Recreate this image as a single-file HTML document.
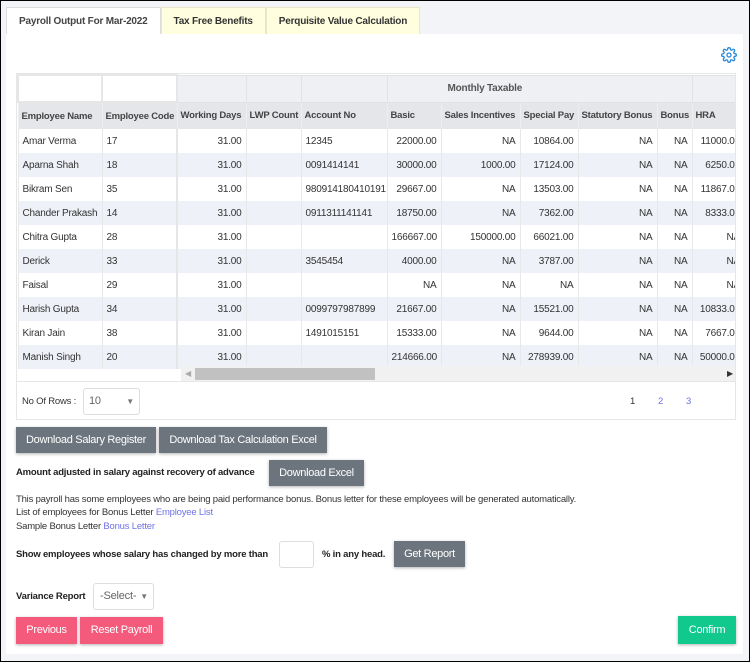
<!DOCTYPE html>
<html><head><meta charset="utf-8"><style>
*{box-sizing:border-box;margin:0;padding:0}
body{width:750px;height:662px;background:#f3f4f8;font-family:"Liberation Sans",Arial,sans-serif;font-size:10px;color:#333;position:relative;overflow:hidden;border:1px solid #000;letter-spacing:-0.2px}
.tabs{position:absolute;left:5px;top:6px;height:27px;display:flex}
.tab{height:27px;line-height:27px;padding:0 12px;font-size:10px;font-weight:bold;color:#333;background:#ffffe0;border:1px solid #e8e8c8;border-bottom:none}
.tab.a{background:#fff;border-color:#ddd;color:#444}
.panel{position:absolute;left:5px;top:33px;width:737px;height:620px;background:#fff}
.gear{position:absolute;left:720px;top:46px}
.wrap{position:absolute;left:15px;top:72px;width:720px;height:309px;overflow:hidden;border:1px solid #e6e6e6}
table{border-collapse:collapse;table-layout:fixed;position:absolute;left:0;top:0;width:726px}
td{height:24px;padding:0 4px;white-space:nowrap;overflow:hidden;border-left:1px solid #e8e8e8;font-size:10px;color:#333}
tr.h1 td{height:27px;background:#eef0f4;border:1px solid #e0e2e6;font-weight:bold;color:#555}
tr.h1 td.w{background:#fff;border:2px solid #e6e6e6}
tr.h2 td{height:27px;background:#e4e6ea;font-weight:bold;color:#444;border-left:1px solid #eee;font-size:9.5px;padding:0 3px}
tr.r:nth-child(even) td{background:#eef1f8}
td.n{text-align:right}
td.g{border-left:2px solid #e6e6e6}
.sb{position:absolute;left:164px;top:292px;width:556px;height:16px;background:#f1f1f1}
.sb .th{position:absolute;left:14px;top:2px;width:180px;height:12px;background:#c1c1c1}
.pg{position:absolute;left:15px;top:381px;width:720px;height:38px;border:1px solid #e6e6e6;border-top:none}
.sel{position:absolute;border:1px solid #ddd;border-radius:3px;background:#fff;color:#666;font-size:11px}
.btn{position:absolute;background:#6c757d;color:#fff;font-size:11px;letter-spacing:-0.3px;text-align:center;box-shadow:0 1px 3px rgba(0,0,0,.3);white-space:nowrap}
.lbl{position:absolute;font-weight:bold;font-size:9.5px;color:#222;white-space:nowrap}
.tx{position:absolute;font-size:9.5px;color:#333;white-space:nowrap}
a{color:#6f72e8;text-decoration:none}
.pink{background:#f45a7c}
</style></head><body>
<div class="tabs"><div class="tab a">Payroll Output For Mar-2022</div><div class="tab">Tax Free Benefits</div><div class="tab">Perquisite Value Calculation</div></div>
<div class="panel"></div>
<svg class="gear" width="16" height="16" viewBox="0 0 24 24" fill="none" stroke="#2b8ad8" stroke-width="2"><circle cx="12" cy="12" r="3"/><path d="M19.4 15a1.7 1.7 0 0 0 .3 1.8l.1.1a2 2 0 1 1-2.8 2.8l-.1-.1a1.7 1.7 0 0 0-1.8-.3 1.7 1.7 0 0 0-1 1.5V21a2 2 0 1 1-4 0v-.1a1.7 1.7 0 0 0-1.1-1.5 1.7 1.7 0 0 0-1.8.3l-.1.1a2 2 0 1 1-2.8-2.8l.1-.1a1.7 1.7 0 0 0 .3-1.8 1.7 1.7 0 0 0-1.5-1H3a2 2 0 1 1 0-4h.1a1.7 1.7 0 0 0 1.5-1.1 1.7 1.7 0 0 0-.3-1.8l-.1-.1a2 2 0 1 1 2.8-2.8l.1.1a1.7 1.7 0 0 0 1.8.3H9a1.7 1.7 0 0 0 1-1.5V3a2 2 0 1 1 4 0v.1a1.7 1.7 0 0 0 1 1.5 1.7 1.7 0 0 0 1.8-.3l.1-.1a2 2 0 1 1 2.8 2.8l-.1.1a1.7 1.7 0 0 0-.3 1.8V9a1.7 1.7 0 0 0 1.5 1H21a2 2 0 1 1 0 4h-.1a1.7 1.7 0 0 0-1.5 1z"/></svg>
<div class="wrap">
<table>
<colgroup><col style="width:84px"><col style="width:75px"><col style="width:69px"><col style="width:55px"><col style="width:86px"><col style="width:54px"><col style="width:79px"><col style="width:58px"><col style="width:79px"><col style="width:35px"><col style="width:52px"></colgroup>
<tr class="h1"><td class="w"></td><td class="w"></td><td></td><td></td><td></td><td colspan="5" style="padding-left:60px">Monthly Taxable</td><td></td></tr>
<tr class="h2"><td>Employee Name</td><td>Employee Code</td><td class="g">Working Days</td><td>LWP Count</td><td>Account No</td><td>Basic</td><td>Sales Incentives</td><td>Special Pay</td><td>Statutory Bonus</td><td>Bonus</td><td>HRA</td></tr>
<tr class="r"><td>Amar Verma</td><td>17</td><td class="n g">31.00</td><td></td><td>12345</td><td class="n">22000.00</td><td class="n">NA</td><td class="n">10864.00</td><td class="n">NA</td><td class="n">NA</td><td class="n">11000.00</td></tr>
<tr class="r"><td>Aparna Shah</td><td>18</td><td class="n g">31.00</td><td></td><td>0091414141</td><td class="n">30000.00</td><td class="n">1000.00</td><td class="n">17124.00</td><td class="n">NA</td><td class="n">NA</td><td class="n">6250.00</td></tr>
<tr class="r"><td>Bikram Sen</td><td>35</td><td class="n g">31.00</td><td></td><td>980914180410191</td><td class="n">29667.00</td><td class="n">NA</td><td class="n">13503.00</td><td class="n">NA</td><td class="n">NA</td><td class="n">11867.00</td></tr>
<tr class="r"><td>Chander Prakash</td><td>14</td><td class="n g">31.00</td><td></td><td>0911311141141</td><td class="n">18750.00</td><td class="n">NA</td><td class="n">7362.00</td><td class="n">NA</td><td class="n">NA</td><td class="n">8333.00</td></tr>
<tr class="r"><td>Chitra Gupta</td><td>28</td><td class="n g">31.00</td><td></td><td></td><td class="n">166667.00</td><td class="n">150000.00</td><td class="n">66021.00</td><td class="n">NA</td><td class="n">NA</td><td class="n">NA</td></tr>
<tr class="r"><td>Derick</td><td>33</td><td class="n g">31.00</td><td></td><td>3545454</td><td class="n">4000.00</td><td class="n">NA</td><td class="n">3787.00</td><td class="n">NA</td><td class="n">NA</td><td class="n">NA</td></tr>
<tr class="r"><td>Faisal</td><td>29</td><td class="n g">31.00</td><td></td><td></td><td class="n">NA</td><td class="n">NA</td><td class="n">NA</td><td class="n">NA</td><td class="n">NA</td><td class="n">NA</td></tr>
<tr class="r"><td>Harish Gupta</td><td>34</td><td class="n g">31.00</td><td></td><td>0099797987899</td><td class="n">21667.00</td><td class="n">NA</td><td class="n">15521.00</td><td class="n">NA</td><td class="n">NA</td><td class="n">10833.00</td></tr>
<tr class="r"><td>Kiran Jain</td><td>38</td><td class="n g">31.00</td><td></td><td>1491015151</td><td class="n">15333.00</td><td class="n">NA</td><td class="n">9644.00</td><td class="n">NA</td><td class="n">NA</td><td class="n">7667.00</td></tr>
<tr class="r"><td>Manish Singh</td><td>20</td><td class="n g">31.00</td><td></td><td></td><td class="n">214666.00</td><td class="n">NA</td><td class="n">278939.00</td><td class="n">NA</td><td class="n">NA</td><td class="n">50000.00</td></tr>
</table>
<div class="sb"><span style="position:absolute;left:4px;top:3px;font-size:8px;color:#aaa">◀</span><div class="th"></div><span style="position:absolute;right:4px;top:3px;font-size:8px;color:#333">▶</span></div>
</div>
<div class="pg">
<div class="tx" style="left:5px;top:14px">No Of Rows :</div>
<div class="sel" style="left:66px;top:6px;width:57px;height:27px;line-height:25px;padding-left:5px">10<span style="position:absolute;right:5px;font-size:8px;color:#777">▼</span></div>
<div class="tx" style="left:613px;top:14px">1</div>
<div class="tx" style="left:641px;top:14px;color:#6f72e8">2</div>
<div class="tx" style="left:669px;top:14px;color:#6f72e8">3</div>
</div>
<div class="btn" style="left:15px;top:426px;width:140px;height:26px;line-height:26px">Download Salary Register</div>
<div class="btn" style="left:158px;top:426px;width:168px;height:26px;line-height:26px">Download Tax Calculation Excel</div>
<div class="lbl" style="left:15px;top:466px">Amount adjusted in salary against recovery of advance</div>
<div class="btn" style="left:268px;top:459px;width:95px;height:26px;line-height:26px">Download Excel</div>
<div class="tx" style="left:15px;top:493px">This payroll has some employees who are being paid performance bonus. Bonus letter for these employees will be generated automatically.</div>
<div class="tx" style="left:15px;top:506px">List of employees for Bonus Letter <a>Employee List</a></div>
<div class="tx" style="left:15px;top:520px">Sample Bonus Letter <a>Bonus Letter</a></div>
<div class="lbl" style="left:15px;top:548px">Show employees whose salary has changed by more than</div>
<div class="sel" style="left:278px;top:540px;width:35px;height:27px"></div>
<div class="lbl" style="left:321px;top:548px">% in any head.</div>
<div class="btn" style="left:393px;top:540px;width:71px;height:26px;line-height:26px">Get Report</div>
<div class="lbl" style="left:15px;top:590px">Variance Report</div>
<div class="sel" style="left:92px;top:582px;width:61px;height:27px;line-height:25px;padding-left:6px">-Select-<span style="position:absolute;right:5px;font-size:8px;color:#777">▼</span></div>
<div class="btn pink" style="left:15px;top:616px;width:61px;height:27px;line-height:27px">Previous</div>
<div class="btn pink" style="left:79px;top:616px;width:83px;height:27px;line-height:27px">Reset Payroll</div>
<div class="btn" style="left:677px;top:615px;width:58px;height:28px;line-height:28px;background:#11c98d">Confirm</div>
</body></html>
